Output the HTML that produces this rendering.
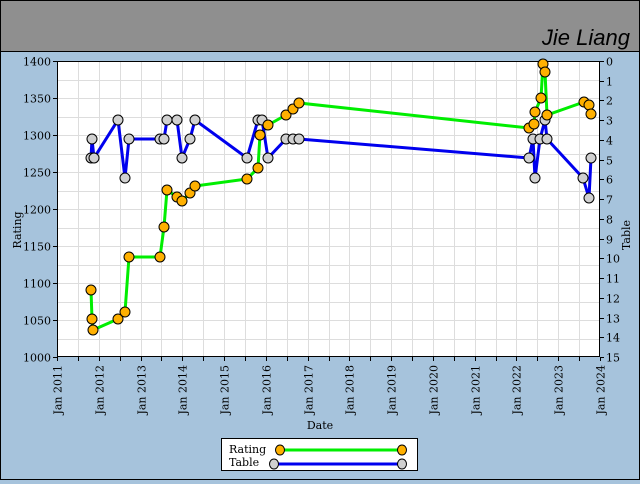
<!DOCTYPE html>
<html><head><meta charset="utf-8"><style>
body{margin:0;width:640px;height:480px;overflow:hidden;background:#a6c3dc;font-family:"DejaVu Serif","Liberation Serif",serif}
</style></head><body>
<svg width="640" height="480" xmlns="http://www.w3.org/2000/svg" font-family="DejaVu Serif, Liberation Serif, serif">
<rect x="0.5" y="0.5" width="639" height="479" fill="#a6c3dc" stroke="#000"/>
<rect x="0.5" y="0.5" width="639" height="51" fill="#8f8f8f" stroke="#000"/>
<text x="630" y="45" text-anchor="end" font-family="Liberation Sans, sans-serif" font-size="22" fill="#000" font-style="italic">Jie Liang</text>
<rect x="57" y="61" width="543" height="296" fill="#fff"/>
<g stroke="#dddddd" stroke-width="1" id="grid"></g>
<g id="axes" stroke="#000" fill="none"></g>
<g id="labels" font-size="11" fill="#000"></g>
<g id="series"></g>
<text x="320" y="429" font-size="11" text-anchor="middle">Date</text>
<text transform="translate(21,230) rotate(-90)" font-size="11" text-anchor="middle">Rating</text>
<text transform="translate(630,235) rotate(-90)" font-size="11" text-anchor="middle">Table</text>
<rect x="221.5" y="438.5" width="196" height="32" fill="#fff" stroke="#000"/>
<text x="229" y="453" font-size="11">Rating</text>
<text x="229" y="466" font-size="11">Table</text>
<line x1="280" y1="450" x2="402" y2="450" stroke="#00ee00" stroke-width="3"/>
<line x1="274" y1="464" x2="402" y2="464" stroke="#0000ee" stroke-width="3"/>
<ellipse cx="280" cy="450" rx="4.5" ry="5" fill="#ffb000" stroke="#000"/>
<ellipse cx="402" cy="450" rx="4.5" ry="5" fill="#ffb000" stroke="#000"/>
<ellipse cx="274" cy="464" rx="4.5" ry="5" fill="#d0d0d0" stroke="#000"/>
<ellipse cx="402" cy="464" rx="4.5" ry="5" fill="#d0d0d0" stroke="#000"/>
</svg>
<script>
const NS="http://www.w3.org/2000/svg";
function el(p,t,a,txt){const e=document.createElementNS(NS,t);for(const k in a)e.setAttribute(k,a[k]);if(txt!==undefined)e.textContent=txt;document.getElementById(p).appendChild(e);return e;}
const X0=57,X1=600,Y0=61,Y1=357,yr=(X1-X0)/13;
for(let i=1;i<26;i++){const x=Math.round(X0+i*yr/2)+.5;el('grid','line',{x1:x,y1:Y0,x2:x,y2:Y1});}
for(let i=1;i<16;i++){const y=Math.round(Y1-i*(Y1-Y0)/16)+.5;el('grid','line',{x1:X0,y1:y,x2:X1,y2:y});}
el('axes','rect',{x:X0+.5,y:Y0+.5,width:X1-X0-1,height:Y1-Y0-1,stroke:'#000'});
for(let i=0;i<=8;i++){const y=Math.round(Y1-i*(Y1-Y0)/8)+.5;el('axes','line',{x1:X0-4,y1:y,x2:X0,y2:y});el('labels','text',{x:X0-6,y:y+4,'text-anchor':'end'},String(1000+50*i));}
for(let i=0;i<=15;i++){const y=Math.round(Y0+i*(Y1-Y0)/15)+.5;el('axes','line',{x1:X1,y1:y,x2:X1+4,y2:y});el('labels','text',{x:X1+6,y:y+4},String(i));}
for(let i=0;i<=26;i++){const x=Math.round(X0+i*yr/2)+.5;el('axes','line',{x1:x,y1:Y1,x2:x,y2:Y1+4});
 if(i%2==0){el('labels','text',{transform:`translate(${x+4},${Y1+8}) rotate(-90)`,'text-anchor':'end'},'Jan '+(2011+i/2));}}
const tab=[[91,158],[92,139],[94,158],[118,120],[125,178],[129,139],[160,139],[164,139],[167,120],[177,120],[182,158],[190,139],[195,120],[247,158],[258,120],[262,120],[268,158],[286,139],[293,139],[299,139],[529,158],[533,139],[535,178],[540,139],[545,120],[547,139],[583,178],[589,198],[591,158]];
const rat=[[91,290],[92,319],[93,330],[118,319],[125,312],[129,257],[160,257],[164,227],[167,190],[177,197],[182,201],[190,193],[195,186],[247,179],[258,168],[260,135],[268,125],[286,115],[293,109],[299,103],[529,128],[534,124],[535,112],[541,98],[543,64],[545,72],[547,115],[584,102],[589,105],[591,114]];
function series(d,c,f){el('series','polyline',{points:d.map(p=>p.join(',')).join(' '),fill:'none',stroke:c,'stroke-width':3});}
series(rat,'#00ee00');series(tab,'#0000ee');
tab.forEach(p=>el('series','circle',{cx:p[0],cy:p[1],r:5,fill:'#d0d0d0',stroke:'#000'}));
rat.forEach(p=>el('series','circle',{cx:p[0],cy:p[1],r:5,fill:'#ffb000',stroke:'#000'}));
</script>
</body></html>
